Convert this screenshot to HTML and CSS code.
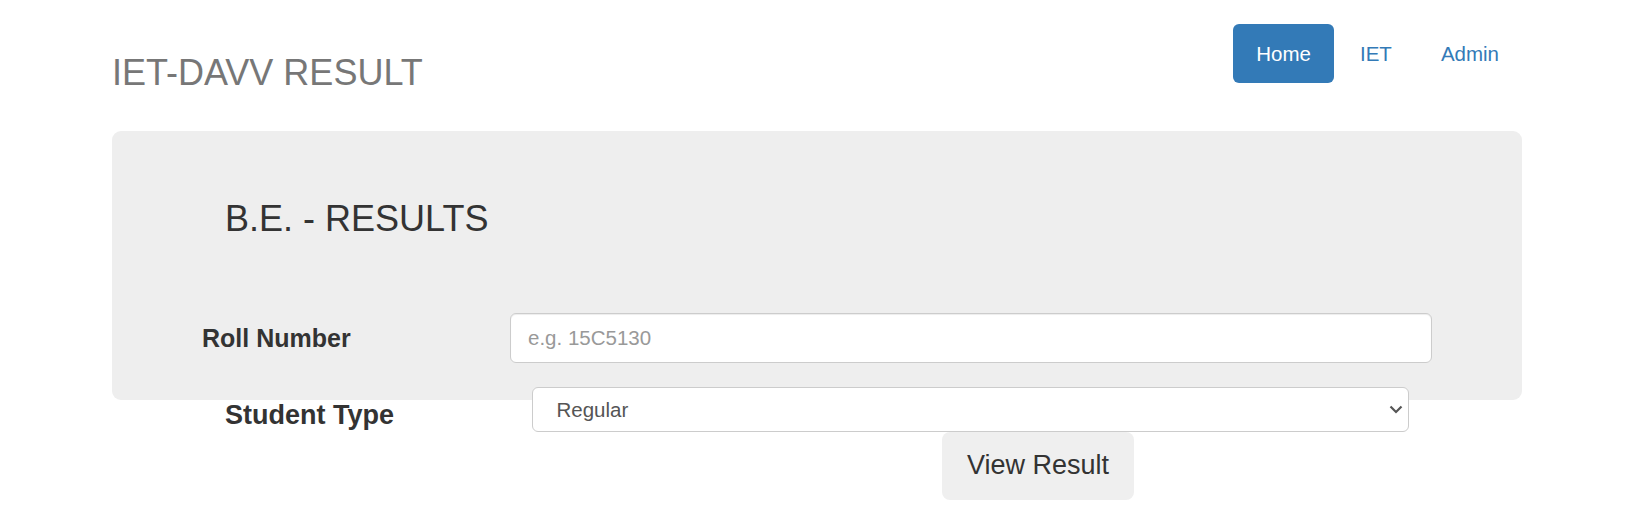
FILE: index.html
```html
<!DOCTYPE html>
<html lang="en">
<head>
<meta charset="utf-8">
<title>IET-DAVV RESULT</title>
<link rel="stylesheet" href="styles.css">
</head>
<body>
<div class="container">
  <header class="header">
    <h3 class="brand">IET-DAVV RESULT</h3>
    <nav>
      <ul class="pills">
        <li><a class="pill active" href="#">Home</a></li>
        <li><a class="pill" href="#">IET</a></li>
        <li><a class="pill" href="#">Admin</a></li>
      </ul>
    </nav>
  </header>
  <form class="form">
    <div class="jumbotron">
      <h2 class="title">B.E. - RESULTS</h2>
      <div class="row row-roll">
        <label class="label label-roll" for="roll">Roll Number</label>
        <input class="input" id="roll" type="text" placeholder="e.g. 15C5130">
      </div>
    </div>
    <div class="row row-type">
      <label class="label label-type" for="type">Student Type</label>
      <div class="select-wrap">
        <select class="select" id="type">
          <option>Regular</option>
        </select>
        <svg class="chevron" width="14" height="9" viewBox="0 0 14 9"><polyline points="1.5,1.5 7,7 12.5,1.5" fill="none" stroke="#555" stroke-width="2.2"/></svg>
      </div>
    </div>
    <div class="actions">
      <button class="btn" type="button">View Result</button>
    </div>
  </form>
</div>
</body>
</html>
```
FILE: styles.css
```css
* { box-sizing: border-box; }
body {
  margin: 0;
  background: #fff;
  font-family: "Liberation Sans", Arial, sans-serif;
  color: #333;
}
.container {
  width: 1410px;
  margin-left: 112px;
}
.header {
  display: flex;
  justify-content: space-between;
  align-items: flex-start;
  height: 131px;
  padding-top: 24px;
}
.brand {
  margin: 29.5px 0 0 0;
  font-size: 36px;
  line-height: 38px;
  font-weight: normal;
  color: #777;
}
.pills {
  list-style: none;
  margin: 0;
  padding: 0;
  display: flex;
  gap: 3px;
}
.pill {
  display: block;
  padding: 15px 23px;
  line-height: 29px;
  font-size: 20.5px;
  color: #337ab7;
  text-decoration: none;
  border-radius: 6px;
}
.pill.active {
  background: #337ab7;
  color: #fff;
}
.form {
  margin: 0;
}
.jumbotron {
  background: #eee;
  border-radius: 9px;
  padding: 68px 0 37px 0;
}
.title {
  margin: 0 0 75px 113px;
  font-size: 36px;
  line-height: 39px;
  font-weight: normal;
  color: #333;
}
.row {
  display: flex;
}
.row-roll {
  align-items: center;
  padding-left: 90px;
}
.label {
  font-weight: bold;
  color: #333;
}
.label-roll {
  width: 308px;
  font-size: 25px;
  line-height: 30px;
}
.input {
  width: 922px;
  height: 50px;
  border: 1px solid #ccc;
  border-radius: 6px;
  padding: 0 17px;
  font-family: "Liberation Sans", Arial, sans-serif;
  font-size: 20.5px;
  color: #555;
  background: #fff;
  box-shadow: inset 0 1px 1px rgba(0,0,0,.075);
  outline: none;
}
.input::placeholder { color: #999; }
.row-type {
  margin-top: -13px;
  align-items: flex-start;
  padding-left: 113px;
}
.label-type {
  width: 307px;
  font-size: 27px;
  line-height: 32px;
  padding-top: 12px;
}
.select-wrap {
  position: relative;
  width: 877px;
  height: 45px;
}
.select {
  width: 100%;
  height: 45px;
  border: 1px solid #ccc;
  border-radius: 6px;
  padding: 0 0 0 23.5px;
  font-family: "Liberation Sans", Arial, sans-serif;
  font-size: 20.5px;
  color: #555;
  background: #fff;
  -webkit-appearance: none;
  appearance: none;
  outline: none;
}
.chevron {
  position: absolute;
  right: 6px;
  top: 18px;
  pointer-events: none;
}
.actions {
  display: flex;
}
.btn {
  margin-left: 830px;
  width: 192px;
  height: 68px;
  padding: 0 0 2px 0;
  border: none;
  border-radius: 8px;
  background: #efefef;
  font-family: "Liberation Sans", Arial, sans-serif;
  font-size: 27px;
  color: #333;
}
```
